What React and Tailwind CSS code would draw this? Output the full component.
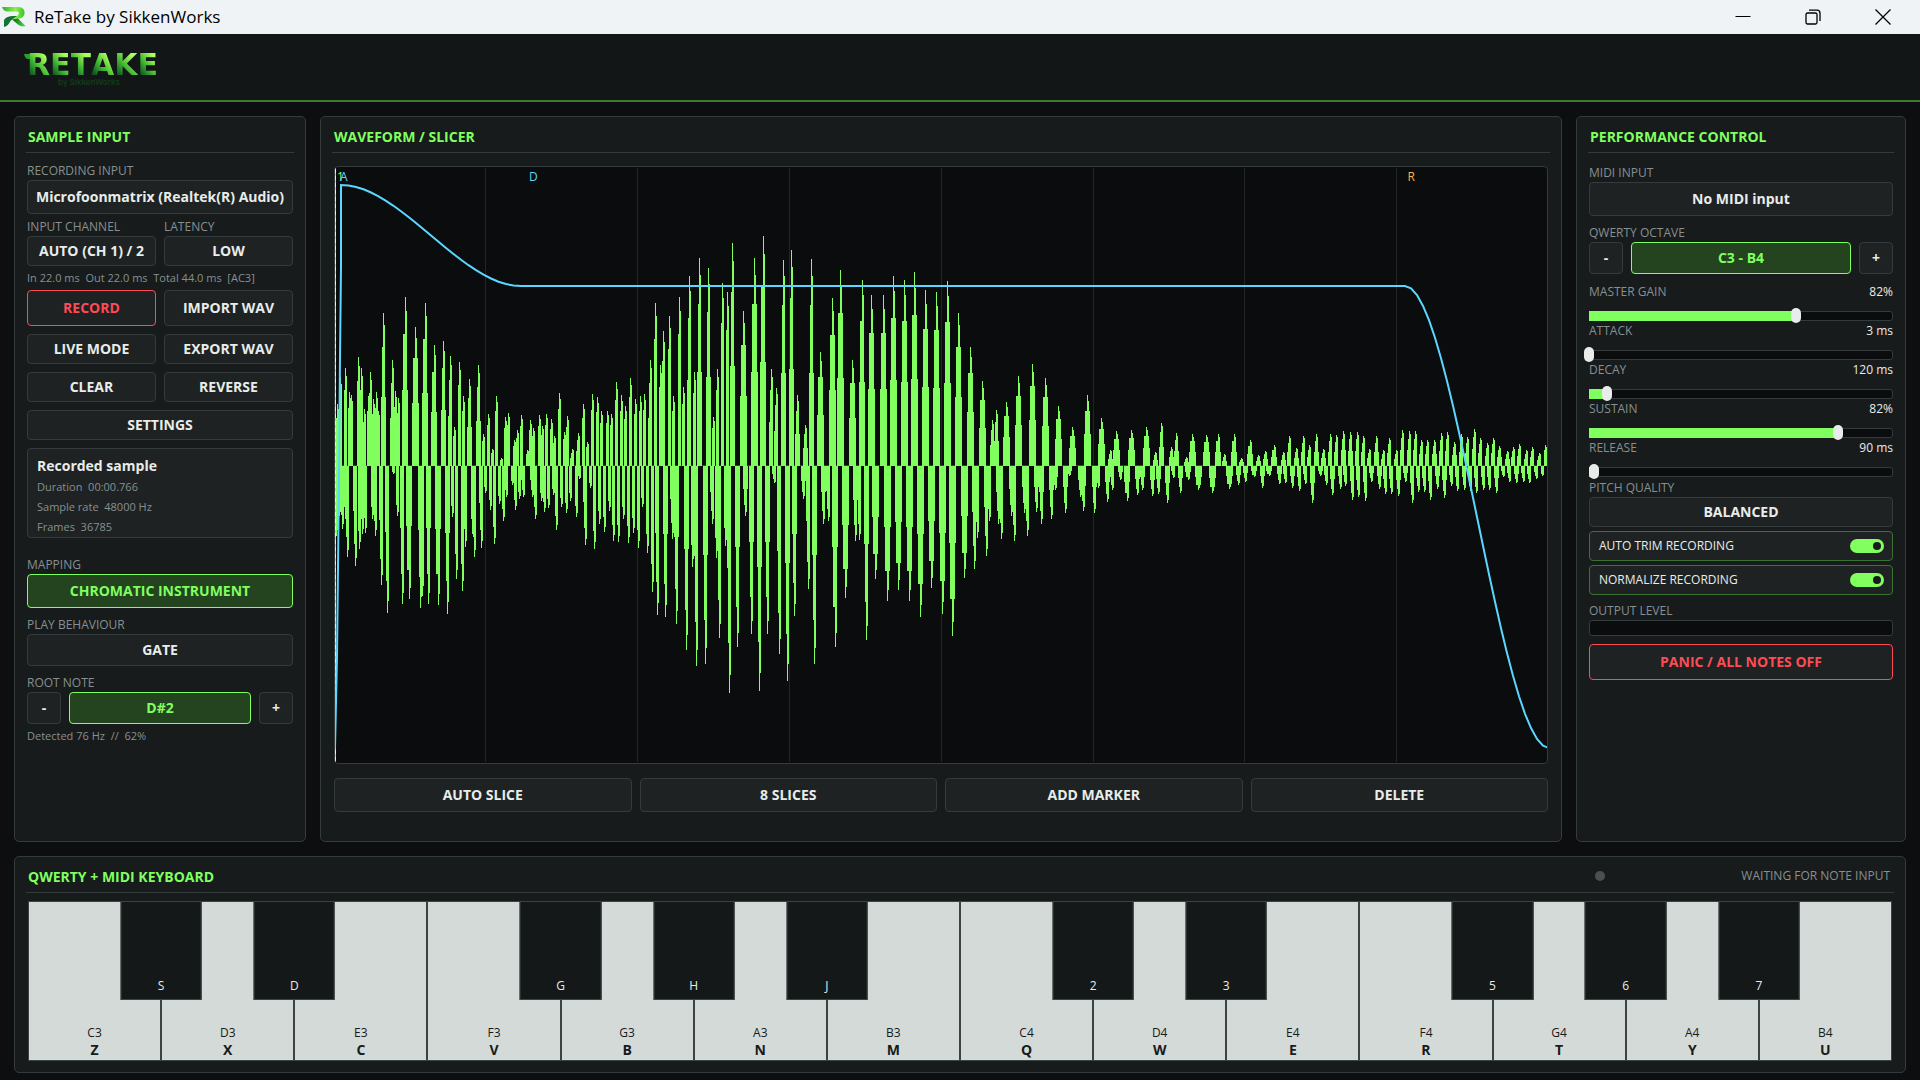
import clsx from 'clsx';

// [x, height] pairs, measured from the zero line
const PEAKS_UP = [
    [3, 62], [6, 89], [11, 98], [15, 74], [17, 71], [24, 109], [27, 98], [30, 57], [34, 70], [36, 94], [39, 67], [42, 74],
    [44, 55], [49, 153], [58, 106], [61, 75], [64, 68], [71, 169], [81, 139], [91, 163], [100, 121], [109, 125], [116, 110],
    [120, 39], [125, 104], [129, 70], [135, 87], [144, 101], [149, 32], [154, 52], [158, 17], [162, 70], [167, 8], [171, 49],
    [174, 53], [180, 26], [183, 36], [187, 51], [193, 16], [196, 46], [199, 38], [205, 51], [208, 40], [212, 52], [217, 47],
    [220, 30], [225, 73], [230, 34], [233, 50], [238, 17], [244, 33], [249, 62], [253, 24], [258, 72], [263, 69], [267, 55],
    [273, 55], [277, 52], [282, 84], [287, 71], [291, 60], [296, 88], [301, 67], [306, 70], [310, 72], [316, 106], [321, 163],
    [326, 101], [329, 135], [335, 150], [339, 70], [345, 169], [349, 79], [355, 190], [360, 94], [365, 208], [374, 198],
    [379, 49], [383, 97], [388, 183], [393, 174], [398, 223], [409, 155], [420, 208], [429, 230], [437, 97], [442, 78],
    [449, 206], [457, 216], [463, 71], [471, 41], [477, 207], [486, 114], [498, 168], [506, 196], [518, 106], [528, 186],
    [537, 171], [549, 171], [559, 190], [570, 186], [580, 194], [591, 176], [602, 174], [613, 185], [624, 153], [636, 119],
    [648, 85], [658, 46], [662, 56], [672, 64], [684, 90], [698, 102], [711, 88], [724, 60], [738, 39], [753, 71], [767, 48],
    [776, 16], [782, 35], [797, 36], [812, 39], [821, 14], [827, 43], [837, 19], [842, 33], [852, 9], [858, 32], [872, 31],
    [884, 32], [890, 12], [900, 32], [907, 8], [916, 26], [924, 11], [931, 15], [940, 21], [949, 14], [955, 30], [962, 18],
    [969, 30], [975, 21], [982, 32], [989, 17], [996, 32], [1002, 31], [1009, 35], [1016, 34], [1023, 34], [1029, 30],
    [1035, 17], [1042, 30], [1049, 16], [1055, 28], [1062, 16], [1068, 36], [1075, 35], [1081, 35], [1087, 26], [1093, 26],
    [1100, 26], [1107, 33], [1113, 34], [1120, 24], [1127, 32], [1133, 29], [1140, 37], [1146, 28], [1153, 23], [1159, 28],
    [1165, 20], [1173, 15], [1179, 19], [1185, 22], [1192, 16], [1198, 19], [1205, 13], [1211, 21],
];

const PEAKS_DOWN = [
    [2, 70], [5, 50], [8, 63], [11, 53], [13, 91], [21, 100], [25, 83], [28, 68], [31, 67], [38, 53], [41, 70], [47, 119],
    [53, 147], [59, 8], [63, 50], [68, 138], [75, 133], [86, 142], [88, 130], [94, 138], [104, 139], [113, 148], [118, 51],
    [122, 113], [128, 125], [131, 81], [138, 68], [140, 91], [147, 82], [151, 27], [156, 44], [160, 78], [165, 38],
    [169, 55], [172, 31], [178, 19], [181, 44], [185, 33], [189, 31], [198, 31], [201, 53], [207, 35], [210, 46], [214, 42],
    [219, 29], [222, 64], [227, 41], [232, 47], [236, 35], [242, 51], [245, 13], [251, 79], [256, 22], [260, 83], [265, 58],
    [270, 66], [275, 45], [279, 75], [284, 76], [289, 53], [294, 77], [299, 67], [304, 82], [308, 41], [313, 87],
    [318, 126], [323, 149], [331, 151], [338, 73], [342, 158], [352, 184], [358, 101], [362, 200], [371, 198], [378, 58],
    [382, 92], [385, 172], [391, 80], [395, 227], [403, 181], [411, 50], [417, 168], [425, 225], [433, 168], [440, 17],
    [445, 188], [453, 215], [460, 150], [469, 33], [474, 123], [480, 198], [489, 58], [494, 55], [501, 181], [511, 132],
    [521, 75], [525, 74], [532, 174], [541, 113], [553, 135], [564, 124], [575, 135], [586, 151], [597, 122], [608, 148],
    [618, 170], [630, 112], [640, 103], [643, 72], [652, 90], [655, 55], [664, 58], [667, 73], [677, 50], [680, 75],
    [690, 47], [693, 70], [702, 46], [707, 58], [717, 53], [721, 24], [731, 47], [735, 10], [746, 31], [749, 45], [760, 47],
    [764, 22], [773, 36], [778, 24], [786, 14], [793, 35], [803, 29], [808, 24], [818, 30], [824, 28], [833, 37], [839, 12],
    [846, 27], [854, 14], [864, 24], [878, 27], [895, 23], [904, 19], [911, 16], [920, 11], [928, 22], [935, 10], [945, 18],
    [951, 17], [958, 22], [965, 25], [971, 18], [978, 37], [986, 10], [992, 19], [998, 29], [1006, 23], [1011, 20],
    [1018, 34], [1024, 31], [1031, 35], [1037, 16], [1045, 23], [1051, 28], [1057, 28], [1064, 30], [1071, 16], [1078, 37],
    [1084, 26], [1090, 26], [1096, 34], [1103, 23], [1110, 32], [1117, 20], [1123, 25], [1130, 24], [1136, 25], [1142, 27],
    [1149, 24], [1155, 24], [1162, 27], [1169, 11], [1175, 16], [1182, 17], [1189, 16], [1195, 17], [1202, 13], [1208, 10],
];

const ZERO = 299;

// Stepped spikes: wide foot, narrower body, two pixel neck, one pixel tip
function spikePath(peaks, dir) {
    return peaks
        .map(([x, h], i) => {
            const prev = i > 0 ? peaks[i - 1][0] : x - 4;
            const next = i < peaks.length - 1 ? peaks[i + 1][0] : x + 4;
            const foot = Math.min(7, Math.max(2, Math.round((next - prev) * 0.34)));
            const body = Math.max(2, Math.round(foot * 0.65));
            const left = x - Math.floor(foot / 2);
            const mid = x - Math.floor(body / 2);
            const y1 = ZERO + dir * Math.round(h * 0.45);
            const y2 = ZERO + dir * Math.round(h * 0.78);
            const y3 = ZERO + dir * Math.round(h * 0.92);
            const y4 = ZERO + dir * h;
            return `M${left} ${ZERO}V${y1}H${mid}V${y2}H${x}V${y4}h1V${y3}h1V${y2}H${Math.max(mid + body, x + 2)}V${y1}H${Math.max(left + foot, x + 2)}V${ZERO}Z`;
        })
        .join('');
}

const WAVE_UP = spikePath(PEAKS_UP, -1);
const WAVE_DOWN = spikePath(PEAKS_DOWN, 1);

// Eased ramp between two envelope levels
function ramp(x0, y0, x1, y1) {
    const points = [];
    for (let i = 0; i <= 24; i++) {
        const t = i / 24;
        const eased = t * t * (3 - 2 * t);
        points.push(`${(x0 + (x1 - x0) * t).toFixed(1)},${(y0 + (y1 - y0) * eased).toFixed(1)}`);
    }
    return points.join(' ');
}

const ENVELOPE = `0,581 2,490 3,400 4,310 5,190 6,100 ${ramp(6, 18, 186, 119)} ${ramp(1070, 119, 1214, 581)}`;

const SLIDERS = [
    { id: 'gain', label: 'MASTER GAIN', value: '82%', position: 68 },
    { id: 'attack', label: 'ATTACK', value: '3 ms', position: 0 },
    { id: 'decay', label: 'DECAY', value: '120 ms', position: 6 },
    { id: 'sustain', label: 'SUSTAIN', value: '82%', position: 82 },
    { id: 'release', label: 'RELEASE', value: '90 ms', position: 1.5 },
];

const KEYS = [
    { note: 'C3', key: 'Z', sharp: 'S' },
    { note: 'D3', key: 'X', sharp: 'D' },
    { note: 'E3', key: 'C' },
    { note: 'F3', key: 'V', sharp: 'G' },
    { note: 'G3', key: 'B', sharp: 'H' },
    { note: 'A3', key: 'N', sharp: 'J' },
    { note: 'B3', key: 'M' },
    { note: 'C4', key: 'Q', sharp: '2' },
    { note: 'D4', key: 'W', sharp: '3' },
    { note: 'E4', key: 'E' },
    { note: 'F4', key: 'R', sharp: '5' },
    { note: 'G4', key: 'T', sharp: '6' },
    { note: 'A4', key: 'Y', sharp: '7' },
    { note: 'B4', key: 'U' },
];

const BUTTON_TONES = {
    normal: 'border-[#343b3c] bg-[#1e2223] text-[#e8ecea]',
    active: 'border-[#80ff5f] bg-[#23441f] text-[#80ff5f]',
    danger: 'border-[#ff4b55] bg-[#1e2223] text-[#ff4b55]',
};

function Button({ tone = 'normal', className, children, ...props }) {
    return (
        <button
            type="button"
            className={clsx(
                'flex items-center justify-center rounded-[4px] border text-[14px] leading-none font-bold whitespace-nowrap',
                BUTTON_TONES[tone],
                className,
            )}
            {...props}
        >
            {children}
        </button>
    );
}

function Caption({ className, children }) {
    return <div className={clsx('h-[19px] text-[12px] leading-5 text-[#879090]', className)}>{children}</div>;
}

function Panel({ title, status, className, children }) {
    return (
        <section className={clsx('flex flex-col rounded-[5px] border border-[#343b3c] bg-[#171b1c]', className)}>
            <div className="mx-[11px] flex h-9 items-center justify-between border-b border-[#343b3c] px-[2px] pt-[3px]">
                <h2 className="text-[14px] font-bold text-[#80ff5f]">{title}</h2>
                {status}
            </div>
            {children}
        </section>
    );
}

function Stepper({ value, name }) {
    return (
        <div role="group" aria-label={name} className="flex h-8 gap-2">
            <Button className="w-[34px]" aria-label={`${name} down`}>-</Button>
            <Button tone="active" className="flex-1">{value}</Button>
            <Button className="w-[34px]" aria-label={`${name} up`}>+</Button>
        </div>
    );
}

function Slider({ id, label, value, position }) {
    return (
        <div className="flex flex-col gap-[10px]">
            <div className="flex h-[19px] justify-between text-[12px] leading-[19px]">
                <label htmlFor={id} className="text-[#879090]">{label}</label>
                <span className="text-[#e8ecea]">{value}</span>
            </div>
            <div className="relative h-[10px] rounded-[3px] border border-[#343b3c] bg-[#0a0c0d]">
                <div className="absolute -inset-y-px -left-px bg-[#80ff5f]" style={{ width: `${position}%` }} />
                <input
                    id={id}
                    type="range"
                    min="0"
                    max="100"
                    step="0.5"
                    defaultValue={position}
                    className="absolute -inset-x-[6px] -top-1 h-[15px] w-[calc(100%+12px)] appearance-none bg-transparent [&::-webkit-slider-thumb]:h-[15px] [&::-webkit-slider-thumb]:w-[10px] [&::-webkit-slider-thumb]:appearance-none [&::-webkit-slider-thumb]:rounded-full [&::-webkit-slider-thumb]:bg-[#e8ecea]"
                />
            </div>
        </div>
    );
}

function Toggle({ id, label }) {
    return (
        <div className="mt-1 flex h-[30px] items-center justify-between rounded-[4px] border border-[#3a7330] bg-[#1e2223] pr-2 pl-[9px]">
            <label htmlFor={id} className="text-[12px] text-[#e8ecea]">{label}</label>
            <input
                id={id}
                type="checkbox"
                defaultChecked
                className="flex h-[14px] w-[34px] appearance-none items-center rounded-full bg-[#4a5050] px-[3px] before:size-2 before:rounded-full before:bg-[#171b1c] checked:justify-end checked:bg-[#80ff5f]"
            />
        </div>
    );
}

function AppIcon() {
    return (
        <svg viewBox="0 0 24 20" className="h-5 w-6" aria-hidden="true">
            <defs>
                <linearGradient id="ribbonTop" x1="0" y1="0" x2="1" y2="0">
                    <stop offset="0" stopColor="#2fae2b" />
                    <stop offset="0.6" stopColor="#8ff04a" />
                    <stop offset="1" stopColor="#35c42f" />
                </linearGradient>
                <linearGradient id="ribbonLeg" x1="0" y1="0" x2="1" y2="0.3">
                    <stop offset="0" stopColor="#0c5a24" />
                    <stop offset="1" stopColor="#3cd235" />
                </linearGradient>
            </defs>
            <path d="M0 0H16C21 0 23 3 22.500 6.500C22 10 19 11.500 15.500 12L10 12.500C12 10.500 14 9.500 15.500 8.500C17.500 7 17.500 4.500 14.500 4.500H6C3 4.500 1 3 0 0Z" fill="url(#ribbonTop)" />
            <path d="M2 20V13C4 10 7 9 11 9H15C11 11.500 9 13 7.500 15.500C6.500 17.500 5 19.500 2 20Z" fill="#127332" />
            <path d="M10 12.500L16 11.500L23.500 19C20 19.800 18 19 16 17.500Z" fill="url(#ribbonLeg)" />
        </svg>
    );
}

function TitleBar() {
    return (
        <div className="flex h-[34px] items-center bg-[#eff3f6] pr-[2px] pl-[2px] text-black">
            <AppIcon />
            <h1 className="ml-2 flex-1 text-[17px] leading-6">ReTake by SikkenWorks</h1>
            <button type="button" aria-label="Minimize" className="flex w-[70px] justify-center">
                <svg viewBox="0 0 16 16" className="size-4"><path d="M0.500 7.500H15.500" stroke="currentColor" /></svg>
            </button>
            <button type="button" aria-label="Restore" className="flex w-[70px] justify-center">
                <svg viewBox="0 0 16 16" className="size-4" fill="none" stroke="currentColor" strokeWidth="1.3">
                    <rect x="1" y="4" width="11" height="11" rx="1.500" />
                    <path d="M4 1.200H12A3 3 0 0 1 15 4.200V12" />
                </svg>
            </button>
            <button type="button" aria-label="Close" className="flex w-[70px] justify-center">
                <svg viewBox="0 0 16 16" className="size-4" stroke="currentColor" strokeWidth="1.3"><path d="M0.500 0.500L15.500 15.500M15.500 0.500L0.500 15.500" /></svg>
            </button>
        </div>
    );
}

function Header() {
    return (
        <header className="flex h-[68px] flex-col border-b-2 border-[#3f7a32] bg-[#121617] pt-[18px] pl-6">
            <div className="flex w-[132px] font-['DejaVu_Sans',sans-serif] text-[30px] leading-[26px] font-bold">
                <svg viewBox="0 0 8 5" className="mt-[2px] -mr-[5px] h-[5px] w-2 shrink-0" aria-hidden="true">
                    <path d="M0 0H8V5H4C2 5 0.500 3 0 0Z" fill="#2c9a2c" />
                </svg>
                {['R', 'E', 'T', 'A', 'K', 'E'].map((letter, i) => (
                    <span key={i} className="bg-linear-to-bl from-[#a9ff5c] from-20% via-[#3fb733] via-55% to-[#0b4a1c] to-90% bg-clip-text text-transparent">
                        {letter}
                    </span>
                ))}
            </div>
            <div className="w-[130px] text-center font-['Inter',sans-serif] text-[8px] leading-[8px] font-semibold text-[#123c17]">by SikkenWorks</div>
        </header>
    );
}

function SampleInput() {
    return (
        <Panel title="SAMPLE INPUT" className="w-[292px]">
            <div className="flex flex-col px-3">
                <Caption className="mt-2">RECORDING INPUT</Caption>
                <Button className="h-[34px]">Microfoonmatrix (Realtek(R) Audio)</Button>
                <div className="mt-[3px] grid grid-cols-2 gap-x-2">
                    <Caption>INPUT CHANNEL</Caption>
                    <Caption>LATENCY</Caption>
                    <Button className="h-[30px]">AUTO (CH 1) / 2</Button>
                    <Button className="h-[30px]">LOW</Button>
                </div>
                <p className="text-[11px] leading-6 whitespace-pre text-[#879090]">In 22.0 ms  Out 22.0 ms  Total 44.0 ms  [AC3]</p>
                <div className="grid grid-cols-2 gap-2">
                    <Button tone="danger" className="h-9">RECORD</Button>
                    <Button className="h-9">IMPORT WAV</Button>
                    <Button className="h-[30px]">LIVE MODE</Button>
                    <Button className="h-[30px]">EXPORT WAV</Button>
                    <Button className="h-[30px]">CLEAR</Button>
                    <Button className="h-[30px]">REVERSE</Button>
                    <Button className="col-span-2 h-[30px]">SETTINGS</Button>
                </div>
                <div className="mt-2 h-[90px] rounded-[4px] border border-[#343b3c] bg-[#1e2223] px-[9px] pt-[5px] text-[11px] leading-5 whitespace-pre text-[#879090]">
                    <h3 className="text-[14px] leading-[23px] font-bold text-[#e8ecea]">Recorded sample</h3>
                    <p>Duration  00:00.766</p>
                    <p>Sample rate  48000 Hz</p>
                    <p>Frames  36785</p>
                </div>
                <Caption className="mt-[17px]">MAPPING</Caption>
                <Button tone="active" className="h-[34px]">CHROMATIC INSTRUMENT</Button>
                <Caption className="mt-[7px]">PLAY BEHAVIOUR</Caption>
                <Button className="h-8">GATE</Button>
                <Caption className="mt-[7px]">ROOT NOTE</Caption>
                <Stepper name="Root note" value="D#2" />
                <p className="text-[11px] leading-6 whitespace-pre text-[#879090]">Detected 76 Hz  //  62%</p>
            </div>
        </Panel>
    );
}

function WaveformView() {
    return (
        <div className="relative flex flex-1 flex-col overflow-hidden rounded-[4px] border border-[#343b3c] bg-[#0a0c0d] text-[12px] leading-5">
            <svg viewBox="0 0 1212 596" preserveAspectRatio="none" className="h-0 w-full grow" role="img" aria-label="Waveform">
                <g shapeRendering="crispEdges">
                    {[1, 2, 3, 4, 5, 6, 7].map((n) => (
                        <rect key={n} x={Math.round(n * 151.9) - 2} y="1" width="1" height="594" fill="#212526" />
                    ))}
                    <rect x="0" y={ZERO - 1} width="1212" height="1" fill="#394040" />
                    <g fill="#80ff5f" transform="translate(-1 0)">
                        <path d={WAVE_UP} />
                        <path d={WAVE_DOWN} />
                    </g>
                    <rect x="0" y="1" width="1" height="594" fill="#80ff5f" />
                    <path d="M0.500 2V595" stroke="#f2e9f0" strokeDasharray="4 3" />
                </g>
                <polyline points={ENVELOPE} fill="none" stroke="#5bd6ff" strokeWidth="2" />
            </svg>
            <span className="absolute top-0 left-[2px] text-[#80ff5f]">1</span>
            <span className="absolute top-0 left-[5px] text-[#5bd6ff]">A</span>
            <span className="absolute top-0 left-[16%] text-[#5bd6ff]">D</span>
            <span className="absolute top-0 left-[88.5%] text-[#ffb04a]">R</span>
        </div>
    );
}

function Waveform() {
    return (
        <Panel title="WAVEFORM / SLICER" className="min-w-0 flex-1">
            <div className="flex flex-1 flex-col px-[13px] pt-[13px] pb-[29px]">
                <WaveformView />
                <div className="mt-[14px] grid grid-cols-4 gap-2">
                    <Button className="h-[34px]">AUTO SLICE</Button>
                    <Button className="h-[34px]">8 SLICES</Button>
                    <Button className="h-[34px]">ADD MARKER</Button>
                    <Button className="h-[34px]">DELETE</Button>
                </div>
            </div>
        </Panel>
    );
}

function PerformanceControl() {
    return (
        <Panel title="PERFORMANCE CONTROL" className="w-[330px]">
            <div className="flex flex-col px-3">
                <Caption className="mt-[10px]">MIDI INPUT</Caption>
                <Button className="h-[34px]">No MIDI input</Button>
                <Caption className="mt-[7px]">QWERTY OCTAVE</Caption>
                <Stepper name="Octave" value="C3 - B4" />
                <div className="mt-2">
                    {SLIDERS.map((slider) => (
                        <Slider key={slider.id} {...slider} />
                    ))}
                </div>
                <Caption className="mt-px">PITCH QUALITY</Caption>
                <Button className="h-[30px]">BALANCED</Button>
                <Toggle id="autoTrim" label="AUTO TRIM RECORDING" />
                <Toggle id="normalize" label="NORMALIZE RECORDING" />
                <Caption className="mt-[6px]">OUTPUT LEVEL</Caption>
                <div className="h-4 rounded-[3px] border border-[#343b3c] bg-[#0a0c0d]" />
                <Button tone="danger" className="mt-2 h-9">PANIC / ALL NOTES OFF</Button>
            </div>
        </Panel>
    );
}

function PianoKey({ note, keyName, sharp }) {
    return (
        <div className="relative flex-1">
            <button type="button" className="flex h-full w-full flex-col items-center justify-end border border-[#3c4343] bg-[#d4dad7] pb-[2px] text-[#171b1c]">
                <span className="text-[12px] leading-[17px]">{note}</span>
                <span className="text-[14px] leading-[17px] font-bold">{keyName}</span>
            </button>
            {sharp && (
                <button type="button" className="absolute top-0 right-0 z-10 flex h-[99px] w-[61%] translate-x-1/2 items-end justify-center border border-[#3c4343] bg-[#141819] pb-[5px] text-[12px] leading-[17px] text-[#e8ecea]">
                    {sharp}
                </button>
            )}
        </div>
    );
}

function Keyboard() {
    const status = (
        <div className="flex items-center pr-[2px] text-[12px] text-[#879090]">
            <span className="size-[10px] rounded-full bg-[#4a5052]" />
            <span className="w-[285px] text-right">WAITING FOR NOTE INPUT</span>
        </div>
    );
    return (
        <Panel title="QWERTY + MIDI KEYBOARD" status={status}>
            <div className="flex h-[179px] px-[13px] pt-2 pb-[11px]">
                {KEYS.map(({ note, key, sharp }) => (
                    <PianoKey key={note} note={note} keyName={key} sharp={sharp} />
                ))}
            </div>
        </Panel>
    );
}

export default function App() {
    return (
        <div className="flex min-h-screen flex-col bg-[#0d0e10] font-['Open_Sans','Noto_Sans',sans-serif]">
            <TitleBar />
            <Header />
            <main className="flex flex-1 flex-col gap-[14px] px-[14px] pt-[14px] pb-[7px]">
                <div className="flex flex-1 gap-[14px]">
                    <SampleInput />
                    <Waveform />
                    <PerformanceControl />
                </div>
                <Keyboard />
            </main>
        </div>
    );
}
